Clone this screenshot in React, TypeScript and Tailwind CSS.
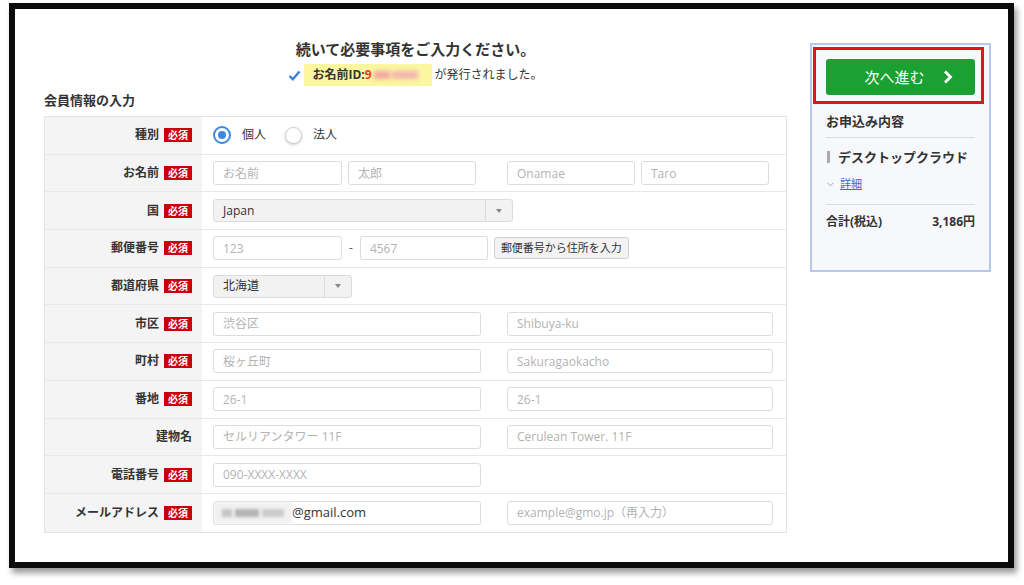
import React from 'react';

const FONT = "font-['Open_Sans','Noto_Sans_CJK_JP',sans-serif]";

const Badge = () => (
  <span className="ml-[5px] inline-flex h-[14px] items-center bg-[#c9000b] px-[4px] text-[10px] font-bold leading-none text-white">
    必須
  </span>
);

type RowProps = {
  label: string;
  required?: boolean;
  last?: boolean;
  children: React.ReactNode;
};

const Row: React.FC<RowProps> = ({ label, required, last, children }) => (
  <div className={last ? 'flex h-[37.7px]' : 'flex h-[37.7px] border-b border-[#e8e8e8]'}>
    <div className="flex w-[157px] shrink-0 items-center justify-end bg-[#f4f4f4] pr-[10px] text-[12px] font-bold text-[#333]">
      {label}
      {required && <Badge />}
    </div>
    <div className="flex flex-1 items-center pl-[11px]">{children}</div>
  </div>
);

type FieldProps = {
  w: string;
  placeholder?: string;
  value?: string;
  className?: string;
};

const Field: React.FC<FieldProps> = ({ w, placeholder, value, className = '' }) => (
  <input
    readOnly
    placeholder={placeholder}
    defaultValue={value}
    className={`h-[24px] rounded-[3px] border border-[#dcdcdc] bg-white px-[9px] text-[12px] text-[#333] outline-none placeholder:text-[#b3b3b3] ${w} ${className}`}
  />
);

const SelectBox: React.FC<{ w: string; value: string }> = ({ w, value }) => (
  <div className={`flex h-[23px] items-center rounded-[3px] border border-[#dcdcdc] bg-[#f2f2f2] ${w}`}>
    <span className="flex-1 pl-[9px] text-[12px] text-[#333]">{value}</span>
    <span className="flex h-full w-[27px] items-center justify-center border-l border-[#dcdcdc]">
      <svg width="6" height="4" viewBox="0 0 6 4">
        <path d="M0 0h6L3 4z" fill="#888" />
      </svg>
    </span>
  </div>
);

const Chevron = () => (
  <svg width="10" height="14" viewBox="0 0 10 14" className="ml-[18px]">
    <path d="M2 1.5 7.5 7 2 12.5" fill="none" stroke="#fff" strokeWidth="2.8" />
  </svg>
);

export default function App() {
  return (
    <div className={`h-[585px] w-[1024px] overflow-hidden bg-white ${FONT}`}>
      <div className="ml-[9px] mt-[3px] flex h-[565px] w-[1005px] items-start border-[6px] border-[#0b0b0b] bg-white shadow-[3px_5px_6px_rgba(0,0,0,0.4)]">
        <main className="ml-[29px] w-[743px]">
          <h1 className="mt-[30px] text-center text-[15px] font-bold leading-[20px] text-[#333]">
            続いて必要事項をご入力ください。
          </h1>

          <div className="mt-[5px] flex items-center justify-center text-[12px] text-[#333]">
            <svg width="13" height="11" viewBox="0 0 13 11">
              <path d="M1.5 6 4.8 9.2 11.5 1.5" fill="none" stroke="#3b7fd9" strokeWidth="2.4" />
            </svg>
            <div className="ml-[3px] flex h-[22px] w-[128px] items-center bg-[#fbf6a0] pl-[8px] font-bold">
              お名前ID:<span className="text-[#e53b2c]">9</span>
              <span className="ml-[2px] flex items-center gap-[2px] blur-[2px]">
                <span className="h-[8px] w-[16px] bg-[#f1a7a0]" />
                <span className="h-[8px] w-[26px] bg-[#f3b5ae]" />
              </span>
            </div>
            <span className="ml-[2px]">が発行されました。</span>
          </div>

          <h2 className="mt-[5px] text-[13px] font-bold leading-[18px] text-[#333]">会員情報の入力</h2>

          <div className="mt-[7px] border border-[#e3e3e3]">
            <Row label="種別" required>
              <span className="flex h-[18px] w-[18px] items-center justify-center rounded-full border-2 border-[#3f87e0] bg-white">
                <span className="h-[8px] w-[8px] rounded-full bg-[#3f87e0]" />
              </span>
              <span className="ml-[11px] text-[12px] text-[#333]">個人</span>
              <span className="ml-[19px] h-[17px] w-[17px] rounded-full border border-[#d0d0d0] bg-white shadow-[0_1px_3px_rgba(0,0,0,0.2)]" />
              <span className="ml-[11px] text-[12px] text-[#333]">法人</span>
            </Row>

            <Row label="お名前" required>
              <Field w="w-[129px]" placeholder="お名前" />
              <Field w="w-[128px]" placeholder="太郎" className="ml-[6px]" />
              <Field w="w-[128px]" placeholder="Onamae" className="ml-[31px]" />
              <Field w="w-[128px]" placeholder="Taro" className="ml-[6px]" />
            </Row>

            <Row label="国" required>
              <SelectBox w="w-[300px]" value="Japan" />
            </Row>

            <Row label="郵便番号" required>
              <Field w="w-[129px]" placeholder="123" />
              <span className="mx-[7px] text-[12px] text-[#555]">-</span>
              <Field w="w-[128px]" placeholder="4567" />
              <button className="ml-[6px] h-[22px] rounded-[3px] border border-[#cfcfcf] bg-[#f3f3f3] px-[6px] text-[11px] text-[#333]">
                郵便番号から住所を入力
              </button>
            </Row>

            <Row label="都道府県" required>
              <SelectBox w="w-[139px]" value="北海道" />
            </Row>

            <Row label="市区" required>
              <Field w="w-[268px]" placeholder="渋谷区" />
              <Field w="w-[266px]" placeholder="Shibuya-ku" className="ml-[26px]" />
            </Row>

            <Row label="町村" required>
              <Field w="w-[268px]" placeholder="桜ヶ丘町" />
              <Field w="w-[266px]" placeholder="Sakuragaokacho" className="ml-[26px]" />
            </Row>

            <Row label="番地" required>
              <Field w="w-[268px]" placeholder="26-1" />
              <Field w="w-[266px]" placeholder="26-1" className="ml-[26px]" />
            </Row>

            <Row label="建物名">
              <Field w="w-[268px]" placeholder="セルリアンタワー 11F" />
              <Field w="w-[266px]" placeholder="Cerulean Tower. 11F" className="ml-[26px]" />
            </Row>

            <Row label="電話番号" required>
              <Field w="w-[268px]" placeholder="090-XXXX-XXXX" />
            </Row>

            <Row label="メールアドレス" required last>
              <div className="flex h-[24px] w-[268px] items-center rounded-[3px] border border-[#dcdcdc] bg-white text-[13px] text-[#333]">
                <span className="flex h-full w-[78px] items-center gap-[3px] rounded-l-[3px] bg-[#f1f1f1] pl-[8px] blur-[1.5px]">
                  <span className="h-[8px] w-[10px] bg-[#c4c4c4]" />
                  <span className="h-[8px] w-[24px] bg-[#b5b5b5]" />
                  <span className="h-[8px] w-[22px] bg-[#cdcdcd]" />
                </span>
                <span>@gmail.com</span>
              </div>
              <Field w="w-[266px]" placeholder="example@gmo.jp（再入力）" className="ml-[26px]" />
            </Row>
          </div>
        </main>

        <aside className="relative ml-[23px] mt-[34px] h-[229px] w-[181px] border-2 border-[#b5c9ea] bg-[#f7f8fc] px-[14px]">
          <div className="absolute left-[1px] top-[2px] h-[57px] w-[171px] border-[3px] border-[#e8101b]" />
          <button className="mt-[14px] flex h-[36px] w-full items-center justify-center rounded-[3px] bg-[#1aa131] pl-[16px] text-[15px] text-white">
            次へ進む
            <Chevron />
          </button>

          <div className="mt-[17px] text-[13px] font-bold leading-[18px] text-[#333]">お申込み内容</div>
          <div className="mt-[7px] border-t border-[#dcdcdc]" />

          <div className="mt-[10px] flex items-center text-[13px] font-bold leading-[18px] text-[#333]">
            <span className="ml-[1px] h-[12px] w-[3px] bg-[#aaa]" />
            <span className="ml-[8px]">デスクトップクラウド</span>
          </div>

          <div className="mt-[10px] flex items-center text-[11px] leading-[16px]">
            <svg width="7" height="5" viewBox="0 0 7 5" className="ml-[1px]">
              <path d="M0.5 0.8 3.5 3.8 6.5 0.8" fill="none" stroke="#9aa" strokeWidth="1" />
            </svg>
            <span className="ml-[6px] text-[#3a70c9] underline">詳細</span>
          </div>

          <div className="mt-[12px] border-t border-[#dcdcdc]" />

          <div className="mt-[9px] flex items-center justify-between text-[12px] font-bold leading-[16px] text-[#333]">
            <span>合計(税込)</span>
            <span>3,186円</span>
          </div>
        </aside>
      </div>
    </div>
  );
}
